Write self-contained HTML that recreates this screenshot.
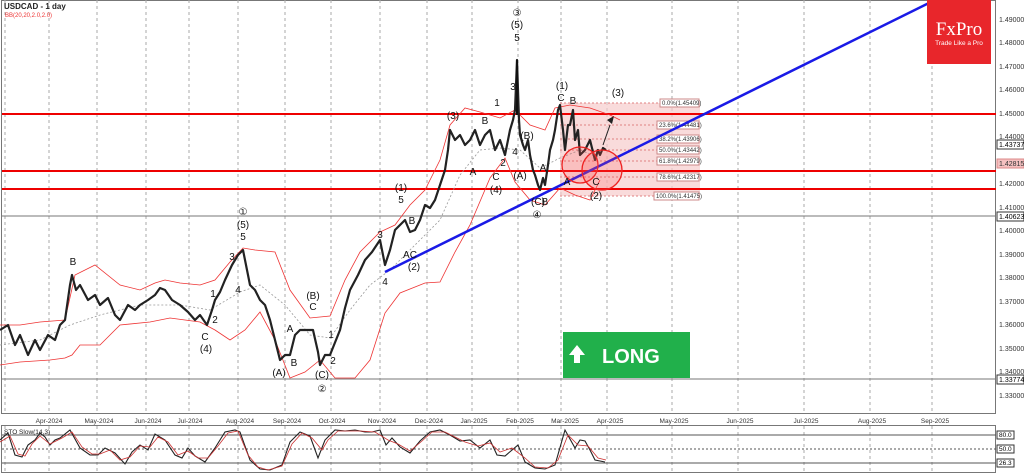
<!DOCTYPE html>
<html><head><meta charset="utf-8"><style>
html,body{margin:0;padding:0;background:#fff;width:1024px;height:474px;overflow:hidden;font-family:"Liberation Sans",sans-serif}
</style></head><body>
<svg width="1024" height="474" xmlns="http://www.w3.org/2000/svg" font-family="Liberation Sans, sans-serif">
<rect x="0" y="0" width="1024" height="474" fill="#fff"/>
<!-- frames -->
<rect x="1.5" y="0.5" width="994" height="413" fill="none" stroke="#777"/>
<rect x="1.5" y="425.5" width="994" height="47" fill="none" stroke="#777"/>
<!-- vertical grid -->
<g stroke="#aaa" stroke-dasharray="3,3" stroke-width="1">
<path d="M5 0V413M49 0V413M97 0V413M146 0V413M189 0V413M238 0V413M285 0V413M331 0V413M380 0V413M427 0V413M472 0V413M518 0V413M561 0V413M607 0V413M672 0V413M738 0V413M804 0V413M870 0V413M932 0V413"/>
<path d="M5 426V472M49 426V472M97 426V472M146 426V472M189 426V472M238 426V472M285 426V472M331 426V472M380 426V472M427 426V472M472 426V472M518 426V472M561 426V472M607 426V472M672 426V472M738 426V472M804 426V472M870 426V472M932 426V472"/>
</g>
<!-- fib box -->
<rect x="560" y="103" width="140" height="93" fill="#f6cccc" opacity="0.7"/>
<g stroke="#e08080" stroke-dasharray="2,2"><path d="M560 103H700M560 125H700M560 139H700M560 150H700M560 161H700M560 177H700M560 196H700"/></g>
<g font-size="6" fill="#333">
<rect x="660" y="99" width="39" height="8" fill="#fff" stroke="#c88"/><text x="662" y="105">0.0%(1.45409)</text>
<rect x="657" y="121" width="42" height="8" fill="#fff" stroke="#c88"/><text x="659" y="127">23.6%(1.44481)</text>
<rect x="657" y="135" width="42" height="8" fill="#fff" stroke="#c88"/><text x="659" y="141">38.2%(1.43906)</text>
<rect x="657" y="146" width="42" height="8" fill="#fff" stroke="#c88"/><text x="659" y="152">50.0%(1.43442)</text>
<rect x="657" y="157" width="42" height="8" fill="#fff" stroke="#c88"/><text x="659" y="163">61.8%(1.42979)</text>
<rect x="657" y="173" width="42" height="8" fill="#fff" stroke="#c88"/><text x="659" y="179">78.6%(1.42317)</text>
<rect x="654" y="192" width="45" height="8" fill="#fff" stroke="#c88"/><text x="656" y="198">100.0%(1.41475)</text>
</g>
<!-- horizontal lines -->
<path d="M2 114H996M2 171H996M2 189H996" stroke="#e00" stroke-width="2"/>
<path d="M2 216H996M2 379H996" stroke="#777" stroke-width="1"/>
<!-- bollinger -->
<g fill="none" stroke="#e33" stroke-width="0.8">
<path d="M0 325L20 325 40 322 65 320 75 275 95 265 120 285 140 290 155 283 165 280 180 283 200 285 215 280 230 262 243 248 255 250 275 252 290 290 310 318 330 316 345 280 360 252 380 232 395 225 410 205 425 190 440 160 450 125 465 108 480 112 500 118 515 110 530 125 545 130 555 108 570 105 590 108 610 115 620 120"/>
<path d="M0 365L20 362 50 360 65 358 72 355 80 345 100 345 120 325 150 322 170 318 200 322 215 330 230 340 245 330 260 312 275 340 290 378 305 372 320 360 335 378 355 378 370 360 385 313 400 293 425 283 440 282 455 252 470 225 490 178 505 158 515 182 530 200 545 205 560 188 575 195 590 200 600 180"/>
</g>
<path d="M0 345L40 340 70 325 100 315 140 305 180 305 210 310 240 292 260 285 285 305 310 335 330 338 350 310 370 285 390 270 420 240 440 220 460 175 480 150 500 148 520 150 540 168 560 158 580 150 600 158" fill="none" stroke="#999" stroke-dasharray="2,2" stroke-width="0.8"/>
<!-- price -->
<path d="M0 330L8 325 15 345 20 335 28 355 35 340 40 350 48 335 55 340 60 325 65 320 70 285 72 275 76 290 80 285 88 300 95 295 100 305 108 298 115 315 120 320 128 305 135 310 140 305 148 300 155 295 160 288 165 290 172 300 180 305 188 312 195 320 200 315 207 325 212 310 215 300 220 292 225 280 232 265 238 255 243 250 247 270 250 285 255 290 260 300 265 305 270 320 275 340 280 360 285 355 290 355 295 335 300 330 305 330 313 330 318 352 320 365 325 355 330 355 336 340 340 330 345 308 350 290 358 275 365 260 372 252 380 240 383 255 385 265 390 250 395 230 400 225 405 220 410 232 415 230 420 220 425 205 430 208 435 200 440 185 445 170 448 150 450 130 455 140 460 135 465 145 470 140 475 130 480 145 485 135 490 130 495 150 500 140 505 155 508 140 510 130 513 120 515 110 517 60 519 120 520 135 523 145 525 150 528 140 530 155 533 170 535 175 538 185 540 190 543 178 545 185 548 165 550 150 553 140 555 130 558 110 560 105 563 130 565 150 568 125 570 125 573 110 575 140 578 130 580 155 585 150 590 140 595 160 598 150 600 155 603 148 606 150" fill="none" stroke="#222" stroke-width="2.2" stroke-linejoin="round"/>
<path d="M517 60V115" stroke="#111" stroke-width="2"/>
<!-- trendline -->
<path d="M385 272L935 0" stroke="#1a1ae6" stroke-width="2.5"/>
<!-- circles -->
<circle cx="580" cy="165" r="18" fill="rgba(255,80,80,0.2)" stroke="#e22" stroke-width="1.3"/>
<circle cx="602" cy="170" r="20" fill="rgba(255,80,80,0.2)" stroke="#e22" stroke-width="1.3"/>
<path d="M603 145L610 125" stroke="#222"/><path d="M607 120L614 116 612 124Z" fill="#222"/>
<!-- labels -->
<g font-size="10" fill="#111" text-anchor="middle">
<text x="73" y="265">B</text><text x="205" y="340">C</text><text x="206" y="352">(4)</text><text x="215" y="323">2</text><text x="213" y="297">1</text>
<text x="232" y="260">3</text><text x="238" y="293">4</text><text x="243" y="240">5</text><text x="243" y="228">(5)</text><text x="243" y="215">①</text>
<text x="290" y="332">A</text><text x="294" y="366">B</text><text x="279" y="376">(A)</text>
<text x="313" y="299">(B)</text><text x="313" y="310">C</text><text x="331" y="338">1</text><text x="333" y="364">2</text><text x="322" y="378">(C)</text><text x="322" y="392">②</text>
<text x="380" y="238">3</text><text x="385" y="285">4</text><text x="401" y="191">(1)</text><text x="401" y="203">5</text><text x="412" y="224">B</text><text x="410" y="258">AC</text><text x="414" y="270">(2)</text>
<text x="453" y="119">(3)</text><text x="473" y="175">A</text><text x="485" y="124">B</text><text x="496" y="180">C</text><text x="496" y="193">(4)</text><text x="497" y="106">1</text><text x="503" y="166">2</text>
<text x="513" y="90">3</text><text x="517" y="41">5</text><text x="517" y="28">(5)</text><text x="517" y="16">③</text>
<text x="527" y="139">(B)</text><text x="515" y="155">4</text><text x="520" y="179">(A)</text><text x="543" y="171">A</text>
<text x="538" y="205">(C)</text><text x="545" y="205">B</text><text x="537" y="218">④</text>
<text x="562" y="89">(1)</text><text x="561" y="101">C</text><text x="573" y="104">B</text><text x="567" y="185">A</text><text x="596" y="185">C</text><text x="596" y="199">(2)</text><text x="618" y="96">(3)</text>
</g>
<!-- top-left -->
<text x="4" y="9" font-size="8" font-weight="bold" fill="#222">USDCAD - 1 day</text>
<text x="5" y="17" font-size="6" fill="#e33">BB(20,20,2.0,2.0)</text>
<!-- logo -->
<rect x="927" y="0" width="64" height="64" fill="#e8262b"/>
<text x="959" y="35" font-family="Liberation Serif, serif" font-size="19" fill="#fff" text-anchor="middle">FxPro</text>
<text x="959" y="45" font-size="6.5" fill="#fff" text-anchor="middle">Trade Like a Pro</text>
<!-- LONG -->
<rect x="563" y="332" width="127" height="46" fill="#21b04b"/>
<path d="M577 345L569 355H574V363H580V355H585Z" fill="#fff"/>
<text x="602" y="363" font-size="20" font-weight="bold" fill="#fff">LONG</text>
<!-- price axis -->
<g font-size="7" fill="#333">
<text x="999" y="22">1.49000</text><text x="999" y="45">1.48000</text><text x="999" y="69">1.47000</text><text x="999" y="92">1.46000</text><text x="999" y="116">1.45000</text><text x="999" y="139">1.44000</text><text x="999" y="186">1.42000</text><text x="999" y="210">1.41000</text><text x="999" y="233">1.40000</text><text x="999" y="257">1.39000</text><text x="999" y="280">1.38000</text><text x="999" y="304">1.37000</text><text x="999" y="327">1.36000</text><text x="999" y="351">1.35000</text><text x="999" y="374">1.34000</text><text x="999" y="398">1.33000</text>
</g>
<g font-size="7"><rect x="997" y="140" width="27" height="9" fill="#fff" stroke="#333"/><text x="999" y="147">1.43737</text>
<rect x="997" y="159" width="27" height="9" fill="#f4c0c0" stroke="#d88"/><text x="999" y="166" fill="#333">1.42815</text>
<rect x="997" y="212" width="27" height="9" fill="#fff" stroke="#333"/><text x="999" y="219">1.40623</text>
<rect x="997" y="375" width="27" height="9" fill="#fff" stroke="#333"/><text x="999" y="382">1.33774</text></g>
<!-- date axis -->
<g font-size="6.5" fill="#333" text-anchor="middle">
<text x="49" y="423">Apr-2024</text><text x="99" y="423">May-2024</text><text x="148" y="423">Jun-2024</text><text x="190" y="423">Jul-2024</text><text x="240" y="423">Aug-2024</text><text x="287" y="423">Sep-2024</text><text x="332" y="423">Oct-2024</text><text x="382" y="423">Nov-2024</text><text x="429" y="423">Dec-2024</text><text x="474" y="423">Jan-2025</text><text x="520" y="423">Feb-2025</text><text x="565" y="423">Mar-2025</text><text x="610" y="423">Apr-2025</text><text x="674" y="423">May-2025</text><text x="740" y="423">Jun-2025</text><text x="806" y="423">Jul-2025</text><text x="872" y="423">Aug-2025</text><text x="935" y="423">Sep-2025</text>
</g>
<!-- stochastic -->
<path d="M2 435H996M2 463H996" stroke="#555"/><path d="M2 449H996" stroke="#555" stroke-dasharray="2,2"/>
<text x="4" y="434" font-size="6.5" fill="#222">STO Slow(14,3)</text>
<path d="M0 440L8 433 15 455 22 457 28 445 35 440 40 433 45 437 50 445 55 440 60 438 70 430 80 448 90 455 98 455 105 448 115 453 125 464 132 452 140 445 148 450 155 434 165 440 175 455 182 458 188 448 195 456 205 462 215 448 225 432 235 430 240 432 250 460 260 469 270 470 282 465 290 442 300 432 310 436 318 458 325 440 335 430 345 431 355 430 365 432 372 432 380 430 386 445 392 438 400 447 410 453 420 441 430 432 440 430 450 435 460 441 470 440 480 448 490 440 497 455 505 456 518 445 525 462 535 468 545 469 555 465 565 430 575 448 580 440 585 441 590 450 595 460 605 462" fill="none" stroke="#222" stroke-width="1.1"/>
<path d="M0 442L10 436 18 454 25 456 32 444 40 436 50 444 62 438 72 432 82 447 92 454 100 454 110 450 120 460 130 457 140 446 150 447 158 437 168 442 178 455 188 451 198 458 208 458 218 446 228 433 238 431 248 455 258 467 268 470 282 466 292 444 302 433 312 438 322 450 328 440 338 431 348 431 360 431 375 432 388 440 398 444 410 451 422 441 432 432 445 432 455 437 465 442 478 446 490 443 500 452 512 448 525 458 535 467 548 468 558 460 568 435 578 445 588 446 598 458 606 460" fill="none" stroke="#c33" stroke-width="0.8"/>
<g font-size="6.5"><rect x="997" y="431" width="17" height="8" fill="#fff" stroke="#333"/><text x="999" y="437">80.0</text>
<rect x="997" y="445" width="17" height="8" fill="#fff" stroke="#333"/><text x="999" y="451">50.0</text>
<rect x="997" y="459" width="17" height="8" fill="#fff" stroke="#333"/><text x="999" y="465">26.3</text></g>
</svg>
</body></html>
